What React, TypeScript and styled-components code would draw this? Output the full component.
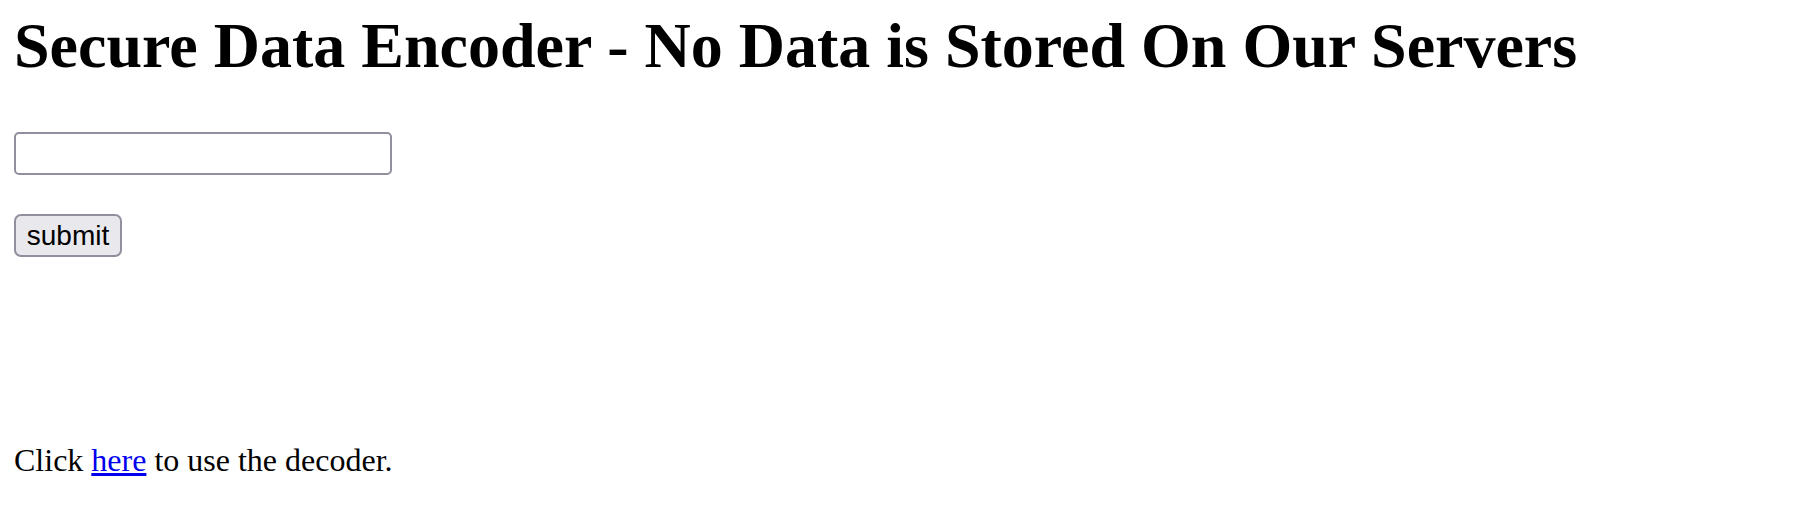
import styled, { createGlobalStyle } from 'styled-components';

const GlobalStyle = createGlobalStyle`
  body {
    margin: 0;
    background: #fff;
    color: #000;
    font-family: 'Liberation Serif', 'Times New Roman', serif;
  }
`;

const Page = styled.div`
  padding: 10px 14px 0;
`;

const Title = styled.h1`
  margin: 0;
  font-size: 64px;
  font-weight: 700;
  line-height: 71px;
`;

const EncodeForm = styled.form`
  display: flex;
  flex-direction: column;
  align-items: flex-start;
  gap: 39px;
  margin-top: 51px;
`;

const TextField = styled.input`
  box-sizing: border-box;
  width: 378px;
  height: 43px;
  margin: 0;
  padding: 2px 6px;
  border: 2px solid #8f8f9d;
  border-radius: 5px;
  background: #fff;
  font-family: 'Liberation Sans', Arial, sans-serif;
  font-size: 26px;
`;

const SubmitButton = styled.button`
  box-sizing: border-box;
  width: 108px;
  height: 43px;
  margin: 0;
  padding: 0;
  border: 2px solid #8f8f9d;
  border-radius: 7px;
  background: #e9e9ed;
  color: #000;
  font-family: 'Liberation Sans', Arial, sans-serif;
  font-size: 28px;
  line-height: 1;
`;

const Footer = styled.p`
  margin: 185px 0 0;
  font-size: 32px;
  line-height: 36px;
  a {
    color: #0000ee;
    text-decoration: underline;
  }
`;

export default function App() {
  return (
    <>
      <GlobalStyle />
      <Page>
        <Title>Secure Data Encoder - No Data is Stored On Our Servers</Title>
        <EncodeForm onSubmit={(e) => e.preventDefault()}>
          <TextField type='text' />
          <SubmitButton type='submit'>submit</SubmitButton>
        </EncodeForm>
        <Footer>
          Click <a href='#'>here</a> to use the decoder.
        </Footer>
      </Page>
    </>
  );
}
